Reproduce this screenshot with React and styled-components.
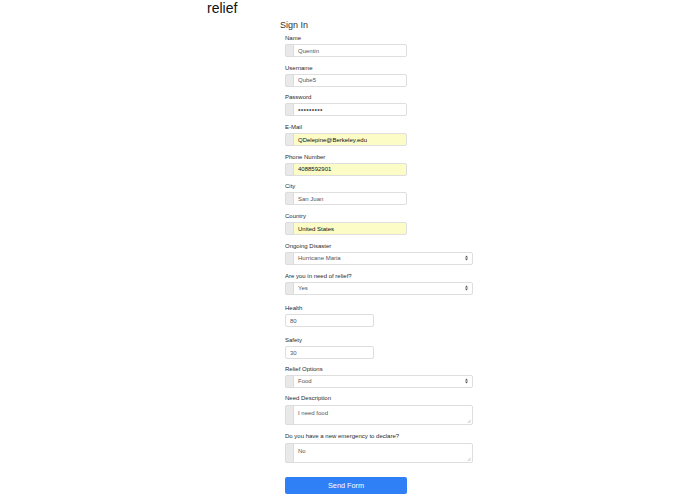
import React from "react";
import styled, { createGlobalStyle } from "styled-components";

const GlobalStyle = createGlobalStyle`
  html, body {
    margin: 0;
    padding: 0;
    background: #ffffff;
    font-family: "Liberation Sans", Arial, sans-serif;
    color: #212529;
  }
  * { box-sizing: border-box; }
`;

const Page = styled.div`
  width: 695px;
  height: 494px;
  overflow: hidden;
`;

const Brand = styled.h1`
  margin: 0;
  padding-left: 207px;
  font-size: 14px;
  line-height: 16px;
  font-weight: 500;
  color: #111;
`;

const Form = styled.form`
  display: flex;
  flex-direction: column;
  padding-left: 285px;
`;

const Title = styled.h2`
  margin: 3.5px 0 3.5px -5px;
  font-size: 9px;
  line-height: 11px;
  font-weight: 400;
  color: #333;
`;

const Group = styled.div`
  display: flex;
  flex-direction: column;
  margin-bottom: ${p => p.$space ?? 6.7}px;
`;

const Label = styled.label`
  display: block;
  font-size: 6px;
  line-height: 8px;
  margin-bottom: ${p => p.$gap ?? 2}px;
  color: #2a2a2a;
`;

const InputGroup = styled.div`
  display: flex;
  width: ${p => p.$width}px;
  height: ${p => p.$height || 13}px;
  border: 1px solid #dedede;
  border-radius: 2px;
  background: ${p => (p.$filled ? "#fbfcc6" : "#fff")};
  position: relative;
`;

const Addon = styled.span`
  flex: 0 0 9px;
  align-self: stretch;
  margin: -1px 0 -1px -1px;
  background: #e9e9ea;
  border: 1px solid #dcdcdc;
  border-radius: 2px 0 0 2px;
`;

const Input = styled.input`
  flex: 1;
  min-width: 0;
  border: 0;
  outline: none;
  background: transparent;
  padding: 0 4px;
  font-family: inherit;
  font-size: ${p => (p.$masked ? 7 : 6)}px;
  letter-spacing: ${p => (p.$masked ? 0.3 : 0)}px;
  color: ${p => (p.$filled ? "#111" : "#555")};
`;

const PlainInput = styled.input`
  width: 89px;
  height: 13px;
  border: 1px solid #dedede;
  border-radius: 2px;
  padding: 0 4px;
  outline: none;
  font-family: inherit;
  font-size: 6px;
  color: #555;
  background: #fff;
`;

const SelectText = styled.span`
  flex: 1;
  display: flex;
  align-items: center;
  padding: 0 4px;
  font-size: 6px;
  color: #555;
`;

const Arrow = styled.svg`
  align-self: center;
  margin-right: 4px;
`;

const AreaText = styled.div`
  flex: 1;
  padding: 3px 4px;
  font-size: 6px;
  line-height: 8px;
  color: #555;
`;

const Grip = styled.svg`
  position: absolute;
  right: 1px;
  bottom: 1px;
`;

const SendButton = styled.button`
  margin-top: 7.5px;
  width: 122px;
  height: 17px;
  border: 0;
  border-radius: 2px;
  background: #2f80f7;
  color: #fff;
  font-family: inherit;
  font-size: 7.3px;
  cursor: pointer;
`;

const TextField = ({ label, value, masked, filled }) => (
  <Group>
    <Label>{label}</Label>
    <InputGroup $width={122} $filled={filled}>
      <Addon />
      <Input
        type="text"
        value={masked ? "•".repeat(value.length) : value}
        readOnly
        $filled={filled}
        $masked={masked}
      />
    </InputGroup>
  </Group>
);

const SelectField = ({ label, value, space }) => (
  <Group $space={space}>
    <Label>{label}</Label>
    <InputGroup $width={188}>
      <Addon />
      <SelectText>{value}</SelectText>
      <Arrow width="3" height="6" viewBox="0 0 3 6">
        <path d="M0 2.4 L1.5 0.4 L3 2.4 Z M0 3.6 L1.5 5.6 L3 3.6 Z" fill="#555" />
      </Arrow>
    </InputGroup>
  </Group>
);

const AreaField = ({ label, value }) => (
  <Group>
    <Label $gap={3}>{label}</Label>
    <InputGroup $width={188} $height={20}>
      <Addon />
      <AreaText>{value}</AreaText>
      <Grip width="4" height="4" viewBox="0 0 4 4">
        <path d="M4 0.5 L0.5 4 M4 2.3 L2.3 4" stroke="#999" strokeWidth="0.5" />
      </Grip>
    </InputGroup>
  </Group>
);

export default function App() {
  return (
    <Page>
      <GlobalStyle />
      <Brand>relief</Brand>
      <Form onSubmit={e => e.preventDefault()}>
        <Title>Sign In</Title>
        <TextField label="Name" value="Quentin" />
        <TextField label="Username" value="Qube5" />
        <TextField label="Password" value="qube5pass" masked />
        <TextField label="E-Mail" value="QDelepine@Berkeley.edu" filled />
        <TextField label="Phone Number" value="4088592901" filled />
        <TextField label="City" value="San Juan" />
        <TextField label="Country" value="United States" filled />
        <SelectField label="Ongoing Disaster" value="Hurricane Maria" />
        <SelectField label="Are you in need of relief?" value="Yes" space={9.5} />
        <Group $space={9}>
          <Label>Health</Label>
          <PlainInput value="80" readOnly />
        </Group>
        <Group $space={5.5}>
          <Label>Safety</Label>
          <PlainInput value="30" readOnly />
        </Group>
        <SelectField label="Relief Options" value="Food" />
        <AreaField label="Need Description" value="I need food" />
        <AreaField label="Do you have a new emergency to declare?" value="No" />
        <SendButton type="submit">Send Form</SendButton>
      </Form>
    </Page>
  );
}
